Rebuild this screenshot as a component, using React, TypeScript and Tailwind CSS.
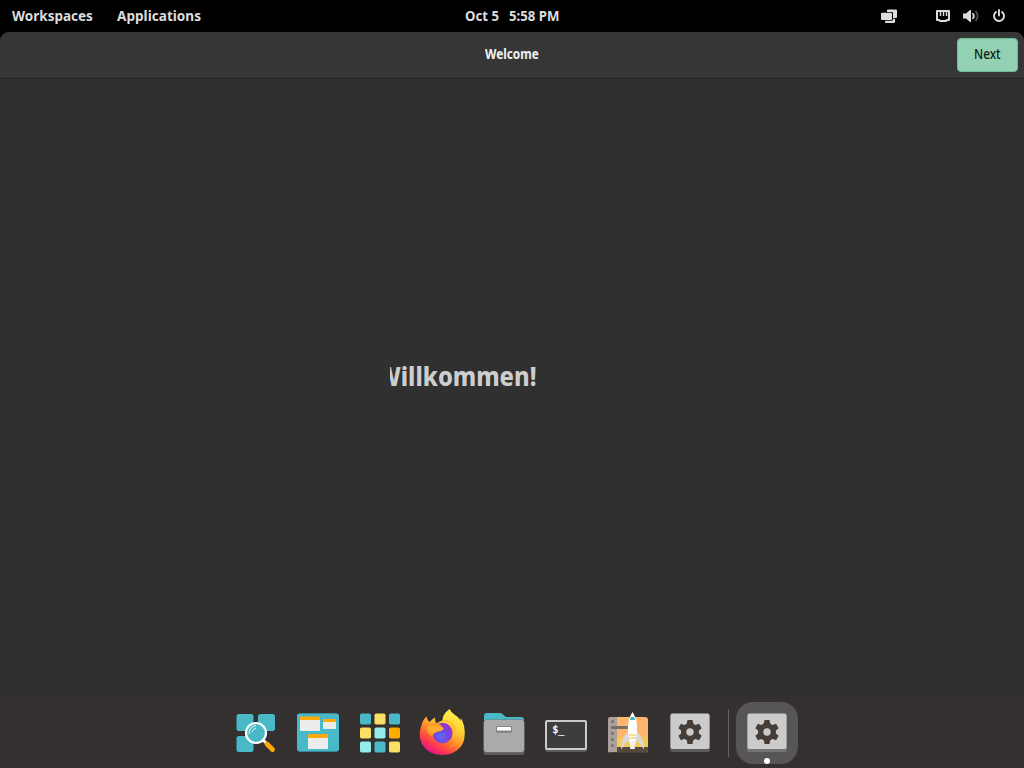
import { useLayoutEffect, useRef, useState } from "react";

type LabelProps = { text: string; width: number; className?: string };

function Label({ text, width, className = "" }: LabelProps) {
  const ref = useRef<HTMLSpanElement>(null);
  const [scale, setScale] = useState(1);
  useLayoutEffect(() => {
    if (ref.current) setScale(width / ref.current.offsetWidth);
  }, [width, text]);
  return (
    <span className="flex shrink-0" style={{ width }}>
      <span
        ref={ref}
        className={`inline-block shrink-0 origin-left whitespace-pre ${className}`}
        style={{ transform: `scaleX(${scale})` }}
      >
        {text}
      </span>
    </span>
  );
}

function DisplaysIcon() {
  return (
    <svg width="18" height="16" viewBox="0 0 18 16" fill="#dcdcdc">
      <path d="M8 1.500h8q1 0 1 1V9q0 1-1 1h-3V5q0-1-1-1H7V2.500q0-1 1-1z" />
      <path d="M2 4.700h9q1 0 1 1V11q0 1-1 1H2q-1 0-1-1V5.700q0-1 1-1z" />
      <path d="M5 12.800h7l1-1v-1h2V14q0 1-1 1H6q-1 0-1-1z" />
    </svg>
  );
}

function EthernetIcon() {
  return (
    <svg width="16" height="16" viewBox="0 0 16 16" fill="none" stroke="#dcdcdc" strokeWidth="2">
      <path d="M2 3h12v9h-2l-1 1H5l-1-1H2z" strokeLinejoin="round" />
      <path d="M5.500 4v4M8.500 4v4M11.500 4v4" strokeWidth="1.400" />
    </svg>
  );
}

function VolumeIcon() {
  return (
    <svg width="16" height="16" viewBox="0 0 16 16" fill="none" strokeLinecap="round">
      <path d="M0 5.500h3l4-3.500h1v12H7l-4-3.500H0z" fill="#dcdcdc" />
      <path d="M10 5.800q1.800 2.200 0 4.400" stroke="#dcdcdc" strokeWidth="1.800" />
      <path d="M13 3.500q3 4.500 0 9" stroke="#555" strokeWidth="1.700" />
    </svg>
  );
}

function PowerIcon() {
  return (
    <svg width="14" height="14" viewBox="0 0 14 14" fill="none" stroke="#dcdcdc" strokeWidth="1.900" strokeLinecap="round">
      <path d="M4 3a5 5 0 1 0 6 0M7 1v5.500" />
    </svg>
  );
}

function LauncherIcon() {
  return (
    <svg width="48" height="48" viewBox="0 0 48 48">
      <g fill="#49b9c8">
        <rect x="4.500" y="6" width="17" height="17" rx="2.500" />
        <rect x="26" y="6" width="17" height="17" rx="2.500" />
        <rect x="4.500" y="28" width="17" height="16" rx="2.500" />
      </g>
      <path d="m31 32 3 3" stroke="#fff" strokeWidth="3" />
      <path d="m35 36 5.500 5.500" stroke="#ffa90a" strokeWidth="4.800" strokeLinecap="round" />
      <circle cx="24" cy="25" r="10" fill="#49b9c8" stroke="#fff" strokeWidth="2.200" />
      <path d="M17 26q0-7 7-8.500M20 24q1-3 4-4" fill="none" stroke="#fff" strokeWidth=".9" />
    </svg>
  );
}

function WorkspacesIcon() {
  return (
    <svg width="48" height="48" viewBox="0 0 48 48">
      <rect x="3" y="5.500" width="42" height="38.500" rx="3" fill="#378794" />
      <rect x="3" y="5.500" width="42" height="37.500" rx="3" fill="#49b9c8" />
      <g fill="#ededed">
        <rect x="6" y="9" width="20" height="14" rx="1" />
        <rect x="29" y="11" width="13" height="10" rx="1" />
        <rect x="14" y="26" width="20" height="15" rx="1" />
      </g>
      <g fill="#ffa90a">
        <path d="M6 12V9.500q0-1 1-1h18q1 0 1 1V12zM29 14v-2q0-1 1-1h11q1 0 1 1v2zM14 30v-3q0-1 1-1h18q1 0 1 1v3z" />
      </g>
    </svg>
  );
}

const tiles = ["#49b9c8", "#f9df63", "#49b9c8", "#f9df63", "#94ebeb", "#ffad00", "#94ebeb", "#49b9c8", "#f9df63"];

function ApplicationsIcon() {
  return (
    <svg width="48" height="48" viewBox="0 0 48 48">
      {tiles.map((fill, i) => (
        <rect key={i} x={4 + (i % 3) * 14.5} y={5.5 + Math.floor(i / 3) * 14} width="11" height="11" rx="1.800" fill={fill} />
      ))}
    </svg>
  );
}

function FirefoxIcon() {
  return (
    <svg width="48" height="48" viewBox="0 0 48 48">
      <defs>
        <linearGradient id="ff-body" x1=".85" y1=".1" x2=".25" y2=".95">
          <stop offset="0" stopColor="#fff44f" />
          <stop offset=".3" stopColor="#ffc330" />
          <stop offset=".55" stopColor="#ff8028" />
          <stop offset=".8" stopColor="#ff3850" />
          <stop offset="1" stopColor="#e31587" />
        </linearGradient>
        <linearGradient id="ff-tail" x1=".5" y1="0" x2=".35" y2="1">
          <stop offset="0" stopColor="#fff44f" />
          <stop offset=".5" stopColor="#ffd133" />
          <stop offset=".8" stopColor="#ff9a28" />
          <stop offset="1" stopColor="#ff5a38" />
        </linearGradient>
        <radialGradient id="ff-globe" cx=".45" cy=".65">
          <stop offset="0" stopColor="#5b6cf4" />
          <stop offset=".6" stopColor="#7249e4" />
          <stop offset="1" stopColor="#9538d2" />
        </radialGradient>
      </defs>
      <path d="M8.500 8.500q.5 3.500 3 5.500Q14 11.500 17 9.500q-.5 4 1.500 6Q23 12 27 12l11-4q6 5 8.200 14Q48 31 43 38.500 36 47 24 47 10 47 4 36 0 28 3 18.500 4.500 12 8.500 8.500z" fill="url(#ff-body)" />
      <path d="M31.500 1Q23.500 7 24.500 14q9 0 12 8 3 9-3.500 15-4 3.500-10 3.500 14 3 20.500-5.500 6-11 .5-23-.8-1.500-1.500-2l.5 3Q40 8.500 37 7q-4-2.500-5.500-6z" fill="url(#ff-tail)" />
      <circle cx="24.500" cy="25" r="10.300" fill="url(#ff-globe)" />
      <path d="M9 17q8-3 13-.5l2 2.500q2.500 1 1 2.700-2 1.800-5.500 1.800l-3.500 2q-1.500 1-2 3Q7 25 9 17z" fill="#ff9a2b" />
      <path d="M9 19q8-2 14.500 0 2.500 1 1 2.700-2 1.800-5.500 1.800l-3 1.500Q10 23 9 19z" fill="#ffac30" />
      <path d="M24 14q7-1.500 10 4l-2.500-.5q5 6 2.500 12.500 5-5 3.500-11Q34 12 26 12z" fill="#ffbe35" />
    </svg>
  );
}

function FilesIcon() {
  return (
    <svg width="48" height="48" viewBox="0 0 48 48">
      <path d="M4 15V8q0-3 3-3h13q2 0 3.500 2L26 9h15q3 0 3 3v4z" fill="#49b9c8" />
      <rect x="3.500" y="14" width="41" height="33" rx="3" fill="#5b5b5b" />
      <rect x="3.500" y="11.500" width="41" height="33" rx="3" fill="#777" />
      <rect x="4" y="12" width="40" height="32" rx="3" fill="#aaa" />
      <rect x="16" y="18" width="16" height="7" rx="1" fill="#858585" />
      <rect x="17" y="19" width="14" height="3.500" rx=".5" fill="#fff" />
    </svg>
  );
}

function TerminalIcon() {
  return (
    <svg width="48" height="48" viewBox="0 0 48 48">
      <rect x="3" y="13" width="42" height="31" rx="3" fill="#5c5c5c" />
      <rect x="4" y="13" width="40" height="28" rx="1" fill="#3d3d3d" stroke="#cbcbcb" strokeWidth="2" />
      <text x="10.300" y="25" fill="#fff" stroke="#fff" strokeWidth=".3" fontSize="10" fontFamily="DejaVu Sans Mono, monospace">$_</text>
    </svg>
  );
}

function RocketIcon() {
  return (
    <svg width="48" height="48" viewBox="0 0 48 48">
      <defs>
        <clipPath id="rocket-card"><rect x="4" y="9" width="40" height="36" rx="3" /></clipPath>
      </defs>
      <g clipPath="url(#rocket-card)">
        <path d="M4 9h40v36H4z" fill="#ffb56d" />
        <path d="M12 29q12-1 17 3 8-5 15-3v12H12z" fill="#f4c956" />
        <path d="M12 39h32v6H12z" fill="#57483f" />
        <path d="M4 9h9v36H4z" fill="#a9a09b" />
        <path d="M4 44h40v1H4z" fill="#4a403a" />
      </g>
      {[13.5, 19.5, 25.5, 31.5, 37.5].map((y) => (
        <circle key={y} cx="8.500" cy={y} r="1.500" fill="#756f6d" />
      ))}
      <path d="M7.500 18h17v3h-17z" fill="#756f6d" />
      <path d="M24 24q-7 5-7 17.500l6-8h11l6 8q0-12-7-17.500z" fill="#d8d8d6" />
      <path d="M28.500 4Q23 12 24 24l2 13h5l2-13q1-12-4.500-20z" fill="#fff" />
      <path d="M26.800 9h3.400l.9 3h-5.200z" fill="#3db5c7" />
      <path d="M25 27h7M25 30h7" stroke="#f5d66a" strokeWidth="1.300" />
      <path d="M27 33h3l1 8h-5z" fill="#efefef" />
    </svg>
  );
}

function SettingsIcon({ shade }: { shade: string }) {
  return (
    <svg width="48" height="48" viewBox="0 0 48 48">
      <rect x="4" y="6" width="40" height="38" rx="2.500" fill={shade} />
      <rect x="4.500" y="5.500" width="39" height="35.500" rx="2" fill="#cbcbcb" />
      <g fill="#453d38">
        {[0, 60, 120].map((a) => (
          <path key={a} d="M21.500 12h5l1 5v13l-1 6h-5l-1-6V17z" transform={`rotate(${a} 24 24)`} />
        ))}
        <circle cx="24" cy="24" r="9" />
      </g>
      <circle cx="24" cy="24" r="3.700" fill="#cbcbcb" />
    </svg>
  );
}

export default function App() {
  return (
    <div className="flex h-[768px] w-[1024px] flex-col overflow-hidden bg-black font-['Noto_Sans',sans-serif]">
      <header className="grid h-8 shrink-0 grid-cols-3 items-center text-[14px] leading-8 font-bold text-[#dcdcdc]">
        <nav className="flex gap-6 pl-3">
          <Label text="Workspaces" width={81} />
          <Label text="Applications" width={84.5} />
        </nav>
        <div className="flex justify-center gap-[10px] pl-px">
          <Label text="Oct 5" width={34} />
          <Label text="5:58 PM" width={51} />
        </div>
        <div className="flex items-center justify-end pr-[18px]">
          <DisplaysIcon />
          <div className="ml-[37px] flex items-center gap-3">
            <EthernetIcon />
            <VolumeIcon />
            <span className="pl-px">
              <PowerIcon />
            </span>
          </div>
        </div>
      </header>

      <section className="flex min-h-0 flex-1 flex-col overflow-hidden rounded-t-[9px] bg-[#303030]">
        <div className="grid h-[47px] shrink-0 grid-cols-3 items-center border-b border-[#222] bg-[#363636] text-[14px]">
          <span />
          <h1 className="flex justify-center pb-1 pl-px font-bold text-[#f2f2f2]">
            <Label text="Welcome" width={54} />
          </h1>
          <div className="flex justify-end pr-1.5">
            <button className="flex h-[34px] w-[61px] items-center justify-center rounded-[4px] border border-[#6bbd96] bg-[#92d1b3] pb-[3px] font-medium text-[#121b17]">
              <Label text="Next" width={27} />
            </button>
          </div>
        </div>
        <main className="flex flex-1 items-center pb-[25px] pl-[390px]">
          <div className="flex w-[146px] justify-end overflow-hidden text-[27px] leading-9 font-extrabold text-[#cdcdcd]">
            <Label text="Willkommen!" width={159} />
          </div>
        </main>
        <footer className="flex h-[70px] shrink-0 items-start bg-[#353030] pt-1 pl-[225px]">
          <div className="flex h-[60px] items-center gap-[14px] pl-[7px]">
            <LauncherIcon />
            <WorkspacesIcon />
            <ApplicationsIcon />
            <FirefoxIcon />
            <FilesIcon />
            <TerminalIcon />
            <RocketIcon />
            <SettingsIcon shade="#5b5b5b" />
          </div>
          <div className="mt-[7px] ml-[14px] h-12 w-px bg-[#666261]" />
          <div className="relative ml-[7px] flex h-[62px] w-[62px] items-center justify-center rounded-[17px] bg-[#575655] pb-0.5">
            <SettingsIcon shade="#747474" />
            <span className="absolute bottom-0 left-7 size-1.5 rounded-full bg-white" />
          </div>
        </footer>
      </section>
    </div>
  );
}
